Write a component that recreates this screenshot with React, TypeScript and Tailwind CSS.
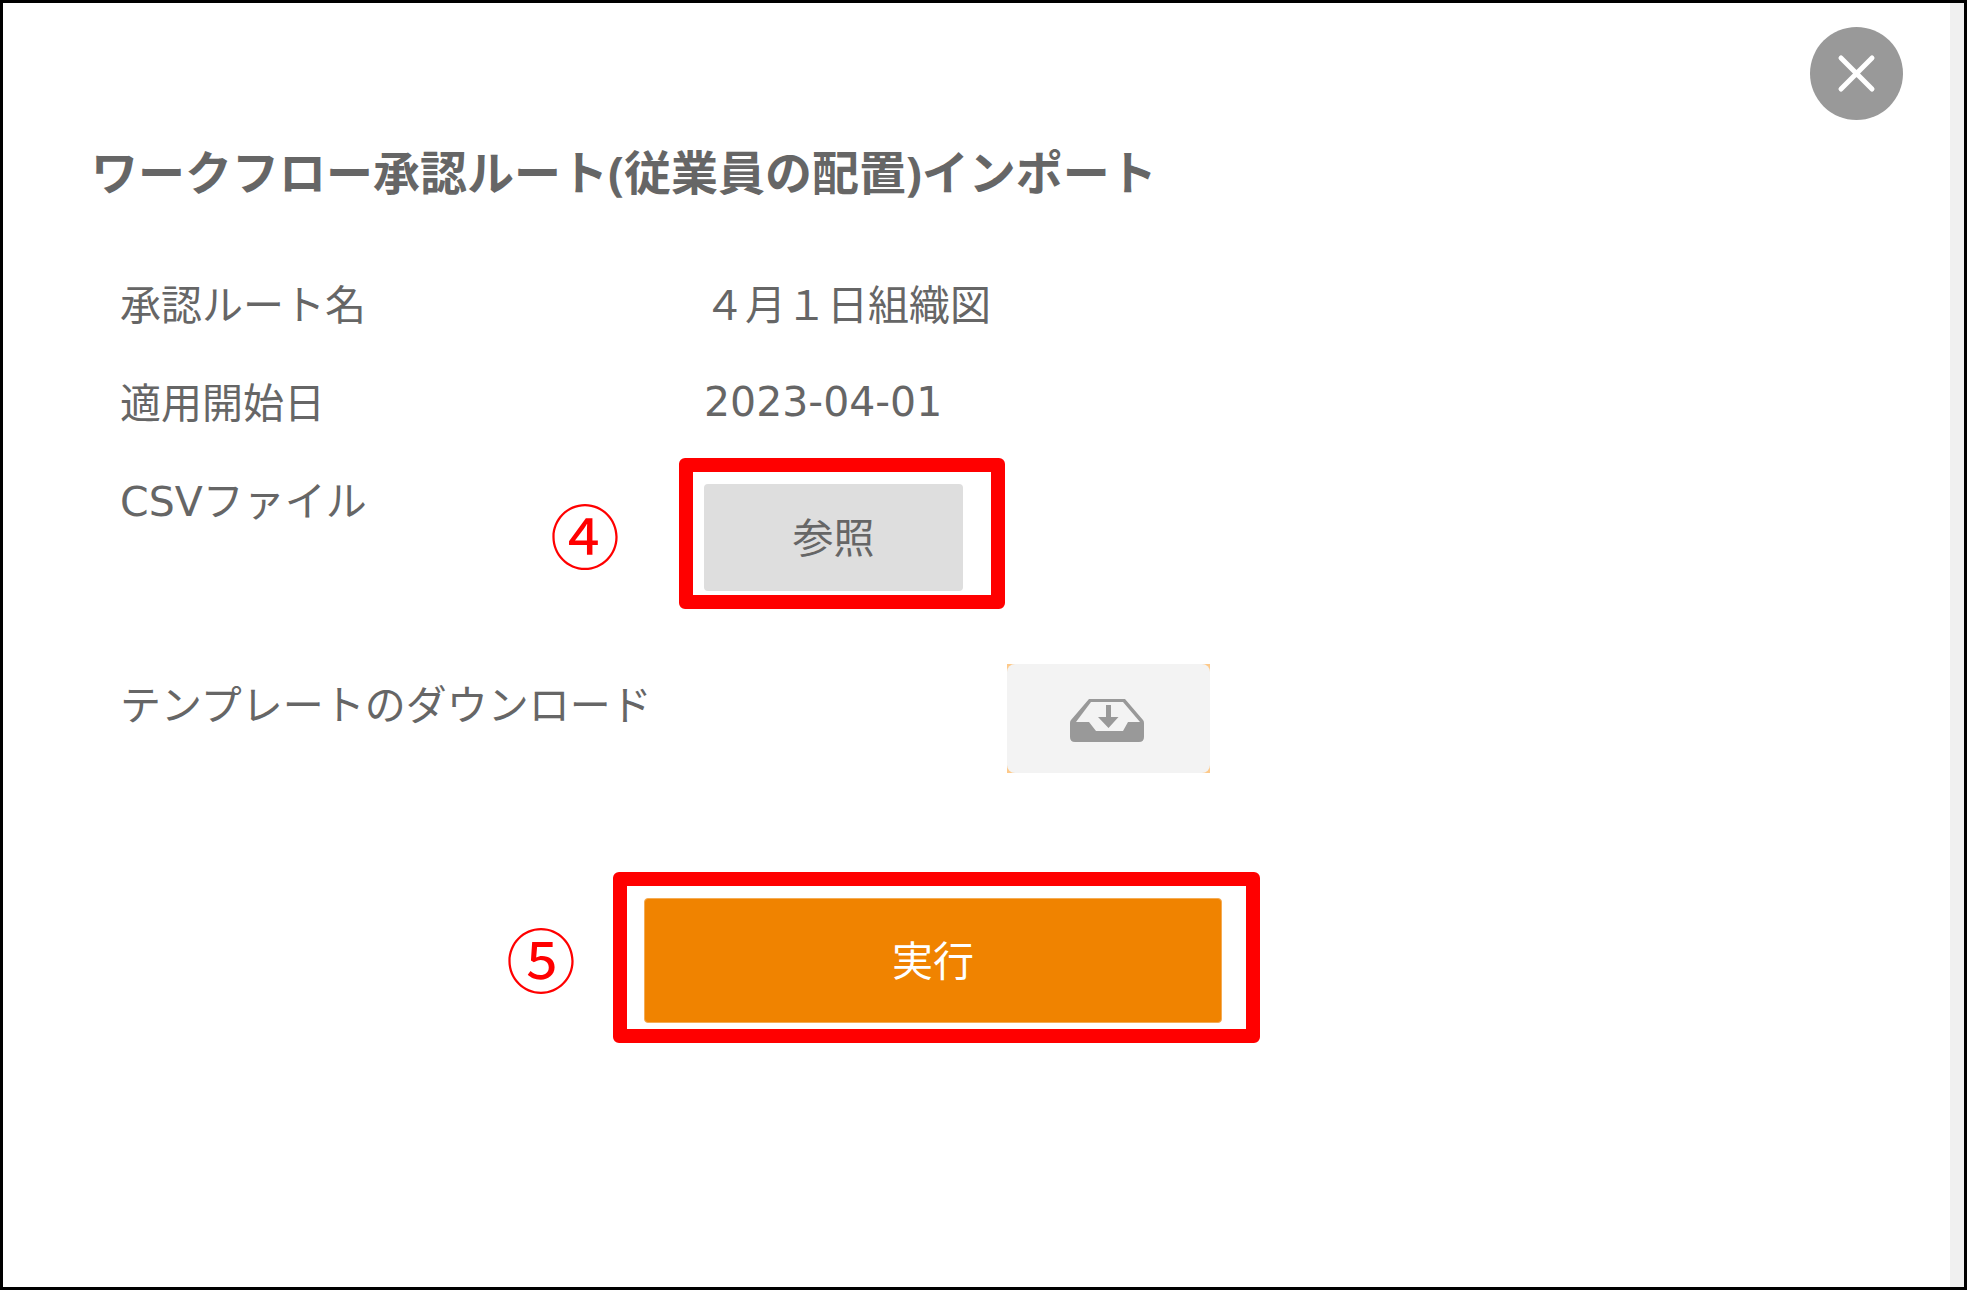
import React from "react";

const labelClass = "w-[584px] shrink-0 text-[41px] leading-[60px]";

const CloseIcon = () => (
  <svg viewBox="0 0 93 93" className="w-full h-full" fill="none" stroke="#fff" strokeWidth="5" strokeLinecap="round">
    <path d="M31 31 L62 62 M62 31 L31 62" />
  </svg>
);

const TrayIcon = () => (
  <svg viewBox="0 0 74 44" className="w-[74px] h-[44px]" fill="#999">
    <path
      fillRule="evenodd"
      d="M19 0 H55 L73 21 Q74 22 74 24 V38 Q74 43 69 43 H5 Q0 43 0 38 V24 Q0 22 1 21 Z M21 3 L6 23 H19 L26 32 H53 L58 23 H70 L53 3 Z"
    />
    <path d="M36 6 H41 V18 H48.500 L38.500 29 L28 18 H36 Z" />
  </svg>
);

// Red frame and number laid over a button
const Callout = ({ mark, frame, badge }: { mark: string; frame: string; badge: string }) => (
  <>
    <span className={`absolute pointer-events-none border-[14px] border-[#ff0000] rounded-md ${frame}`} />
    <span className={`absolute w-[70px] text-center text-[70px] leading-[70px] text-[#ff0000] ${badge}`}>{mark}</span>
  </>
);

const App = () => {
  return (
    <div className="flex min-h-screen bg-white border-[3px] border-black text-[#666] font-['Noto_Sans','Noto_Sans_CJK_JP',sans-serif]">
      <main className="flex-1 pt-6 pl-[88px] pr-[47px] pb-16">
        <div className="flex justify-end">
          <button type="button" aria-label="閉じる" className="w-[93px] h-[93px] rounded-full bg-[#999]">
            <CloseIcon />
          </button>
        </div>

        <h1 className="mt-[22px] text-[47px] leading-[60px] font-bold">ワークフロー承認ルート(従業員の配置)インポート</h1>

        <form className="mt-[72px] pl-[29px]">
          <div className="flex">
            <span className={labelClass}>承認ルート名</span>
            <span className="text-[41px] leading-[60px]">４月１日組織図</span>
          </div>

          <div className="mt-[38px] flex">
            <span className={labelClass}>適用開始日</span>
            <span className="text-[41px] leading-[60px] font-['DejaVu_Sans',sans-serif]">2023-04-01</span>
          </div>

          <div className="mt-[38px] flex">
            <label htmlFor="csv" className={labelClass}>
              <span className="font-['DejaVu_Sans',sans-serif]">CSV</span>ファイル
            </label>
            <div className="relative mt-[14px]">
              <button id="csv" type="button" className="w-[259px] h-[107px] rounded bg-[#dedede] text-[41px]">
                参照
              </button>
              <Callout mark="④" frame="-left-[25px] -top-[26px] -right-[42px] -bottom-[18px]" badge="-left-[154px] top-[18px]" />
            </div>
          </div>

          <div className="mt-[73px] flex">
            <label htmlFor="template" className={`${labelClass} pt-[10px]`}>
              テンプレートのダウンロード
            </label>
            <button id="template" type="button" aria-label="ダウンロード" className="ml-[303px] w-[203px] h-[109px] bg-[#fdc98a]">
              <span className="flex w-full h-full items-center justify-center pr-1 pt-1 rounded-lg bg-[#f3f3f3]">
                <TrayIcon />
              </span>
            </button>
          </div>

          <div className="mt-[125px] ml-[524px] flex">
            <div className="relative">
              <button
                type="submit"
                className="w-[578px] h-[125px] rounded border border-[#f5ac54] bg-[#f08300] text-[41px] text-white"
              >
                実行
              </button>
              <Callout mark="⑤" frame="-left-[31px] -top-[26px] -right-[38px] -bottom-[20px]" badge="-left-[138px] top-[28px]" />
            </div>
          </div>
        </form>
      </main>
      <div className="w-[14px] bg-[#f0f0f0]" />
    </div>
  );
};

export default App;
